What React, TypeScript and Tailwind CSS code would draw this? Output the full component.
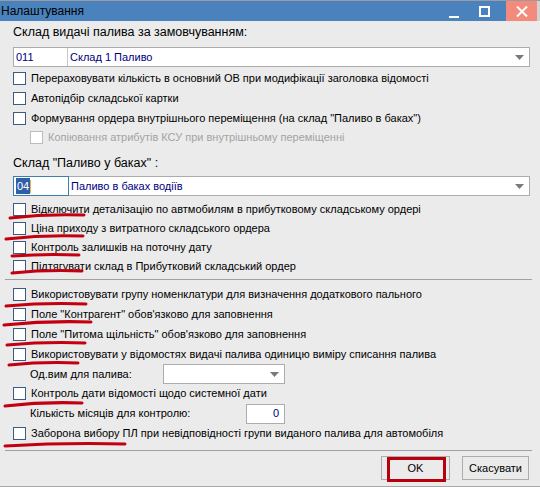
import type { ReactNode } from 'react'

/* Windows-style "Налаштування" dialog with hand-drawn red annotations. */

function Check({ label, disabled, indent }: { label: string; disabled?: boolean; indent?: boolean }) {
  return (
    <div className={`flex h-full items-center gap-[5px] ${indent ? 'pl-[17px]' : ''}`}>
      <span
        className={`size-[13px] shrink-0 border bg-white ${disabled ? 'border-[#bcbcbc]' : 'border-[#3d5a82]'}`}
      />
      <span className={`whitespace-nowrap ${disabled ? 'text-[#a3a3a3]' : 'text-black'}`}>{label}</span>
    </div>
  )
}

function Row({ h, children }: { h: string; children: ReactNode }) {
  return <div className={h}>{children}</div>
}

function Arrow() {
  return (
    <svg width="9" height="5" viewBox="0 0 9 5" className="shrink-0">
      <path d="M0 0h9L4.5 5z" fill="#7a7a7a" />
    </svg>
  )
}

function Separator() {
  return <div className="ml-[-8px] mr-[-2px] h-[2px] border-t border-[#a0a0a0] border-b-white" />
}

// Red marker strokes drawn on top of the screenshot
const strokes: [number, number, number, number][] = [
  [10, 217, 84, 214],
  [6, 238, 83, 235],
  [12, 255, 79, 254],
  [12, 272, 82, 270],
  [6, 305, 86, 303],
  [4, 324, 91, 321],
  [7, 344, 85, 342],
  [9, 364, 78, 362],
  [5, 405, 82, 402],
  [5, 445, 125, 443],
]

export default function App() {
  return (
    <div className="relative h-[487px] w-[540px] overflow-hidden border-t border-[#9c9c9c] bg-[#ebebeb] font-['Liberation_Sans',sans-serif] text-[11px] text-black">
      {/* title bar */}
      <div className="flex h-[20px] items-center bg-[#4a82bd]">
        <span className="pl-[1px] text-[12px] text-black">Налаштування</span>
        <div className="ml-auto flex h-full items-center">
          <div className="flex h-full w-[36px] items-end justify-center pb-[3px]">
            <span className="h-[2px] w-[10px] bg-white" />
          </div>
          <div className="flex h-full w-[24px] items-center justify-center">
            <span className="size-[11px] border-2 border-white" />
          </div>
          <div className="ml-[10px] flex h-full w-[31px] items-center justify-center bg-[#f38b7c]">
            <svg width="12" height="11" viewBox="0 0 12 11">
              <path d="M1 0.5l10 10M11 0.5l-10 10" stroke="white" strokeWidth="2" />
            </svg>
          </div>
          <div className="h-full w-[3px] bg-[#d3d3d3]" />
        </div>
      </div>

      <div className="pl-[13px] pr-[10px]">
        <div className="flex h-[22px] items-center text-[12.5px]">Склад видачі палива за замовчуванням:</div>

        {/* combo 1 */}
        <div className="mt-[4px] flex h-[20px] w-[517px] border border-[#acacac] bg-white">
          <div className="flex w-[54px] items-center border-r border-[#c8c8c8] pl-[2px] text-[#00007d]">011</div>
          <div className="flex flex-1 items-center justify-between pl-[2px] pr-[5px] text-[#00007d]">
            <span>Склад 1 Паливо</span>
            <Arrow />
          </div>
        </div>

        <div className="mt-[1px]">
          <Row h="h-[20px]"><Check label="Перераховувати кількість в основний ОВ при модифікації заголовка відомості" /></Row>
          <Row h="h-[20px]"><Check label="Автопідбір складської картки" /></Row>
          <Row h="h-[20px]"><Check label={'Формування ордера внутрішнього переміщення (на склад "Паливо в баках")'} /></Row>
          <Row h="h-[19px]"><Check disabled indent label="Копіювання атрибутів КСУ при внутрішньому переміщенні" /></Row>
        </div>

        <div className="mt-[6px] flex h-[20px] items-center text-[12.5px]">Склад "Паливо у баках" :</div>

        {/* combo 2 */}
        <div className="mt-[3px] flex h-[20px] w-[517px] border border-[#acacac] bg-white">
          <div className="-m-px flex w-[56px] items-center border border-[#3c7fb1] pl-[2px]">
            <span className="bg-[#2f5fa8] px-px text-white">04</span>
            <span className="h-[13px] w-px bg-[#e2b450]" />
          </div>
          <div className="flex flex-1 items-center justify-between pl-[3px] pr-[5px] text-[#00007d]">
            <span>Паливо в баках водіїв</span>
            <Arrow />
          </div>
        </div>

        <div className="mt-[4px]">
          <Row h="h-[19px]"><Check label="Відключити деталізацію по автмобилям в прибутковому складському ордері" /></Row>
          <Row h="h-[19px]"><Check label="Ціна приходу з витратного складського ордера" /></Row>
          <Row h="h-[19px]"><Check label="Контроль залишків на поточну дату" /></Row>
          <Row h="h-[19px]"><Check label="Підтягувати склад в Прибутковий складський ордер" /></Row>
        </div>

        <div className="mt-[3px]"><Separator /></div>

        <div className="mt-[4px]">
          <Row h="h-[19px]"><Check label="Використовувати групу номенклатури для визначення додаткового пального" /></Row>
          <Row h="h-[20px]"><Check label={'Поле "Контрагент" обов\'язково для заповнення'} /></Row>
          <Row h="h-[20px]"><Check label={'Поле "Питома щільність" обов\'язково для заповнення'} /></Row>
          <Row h="h-[20px]"><Check label="Використовувати у відомостях видачі палива одиницю виміру списання палива" /></Row>
          <div className="flex h-[20px] items-center pl-[17px]">
            <span className="w-[133px]">Од.вим для палива:</span>
            <div className="flex h-[20px] w-[122px] items-center justify-end border border-[#acacac] bg-white pr-[5px]">
              <Arrow />
            </div>
          </div>
          <Row h="h-[19px]"><Check label="Контроль дати відомості щодо системної дати" /></Row>
          <div className="flex h-[21px] items-center pl-[17px]">
            <span className="w-[216px]">Кількість місяців для контролю:</span>
            <div className="flex h-[20px] w-[39px] items-center justify-end border border-[#acacac] bg-white pr-[5px] text-[#00007d]">0</div>
          </div>
          <Row h="h-[19px]"><Check label="Заборона вибору ПЛ при невідповідності групи виданого палива для автомобіля" /></Row>
        </div>

        <div className="mt-[7px]"><Separator /></div>

        <div className="mt-[4px] flex justify-end gap-[12px] pr-px">
          <button className="relative flex h-[24px] w-[69px] items-center justify-center border border-[#adadad] bg-[#ebebeb] text-[11px]">
            OK
            <span className="pointer-events-none absolute left-[5px] top-0 h-[25px] w-[59px] border-[3px] border-[#b8000d]" />
          </button>
          <button className="flex h-[24px] w-[67px] items-center justify-center border border-[#adadad] bg-[#ebebeb] text-[11px]">
            Скасувати
          </button>
        </div>
      </div>

      <div className="absolute bottom-0 left-0 h-px w-full bg-[#a8a8a8]" />

      {/* annotation strokes */}
      <svg className="pointer-events-none absolute left-0 top-0" width="540" height="487">
        {strokes.map(([x1, y1, x2, y2], i) => (
          <path
            key={i}
            d={`M${x1} ${y1}Q${(x1 + x2) / 2} ${Math.min(y1, y2) - 1.5} ${x2} ${y2}`}
            stroke="#c2000f"
            strokeWidth="3"
            strokeLinecap="round"
            fill="none"
          />
        ))}
      </svg>
    </div>
  )
}
